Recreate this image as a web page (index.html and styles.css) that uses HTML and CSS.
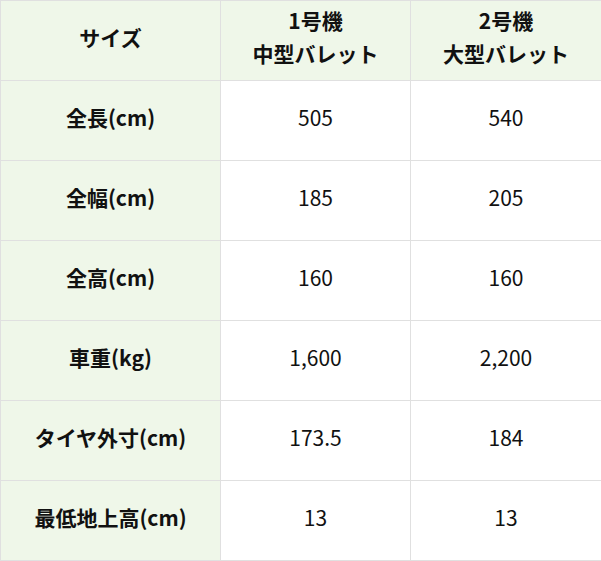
FILE: index.html
```html
<!DOCTYPE html>
<html lang="ja">
<head>
<meta charset="utf-8">
<link rel="stylesheet" href="styles.css">
</head>
<body>
<table class="spec">
  <colgroup><col class="c1"><col class="c2"><col class="c3"></colgroup>
  <thead>
    <tr><th>サイズ</th><th>1号機<br>中型バレット</th><th>2号機<br>大型バレット</th></tr>
  </thead>
  <tbody>
    <tr><th>全長(cm)</th><td>505</td><td>540</td></tr>
    <tr><th>全幅(cm)</th><td>185</td><td>205</td></tr>
    <tr><th>全高(cm)</th><td>160</td><td>160</td></tr>
    <tr><th>車重(kg)</th><td>1,600</td><td>2,200</td></tr>
    <tr><th>タイヤ外寸(cm)</th><td>173.5</td><td>184</td></tr>
    <tr><th>最低地上高(cm)</th><td>13</td><td>13</td></tr>
  </tbody>
</table>
</body>
</html>
```
FILE: styles.css
```css
html, body { margin: 0; padding: 0; background: #fff; }
.spec {
  border-collapse: collapse;
  table-layout: fixed;
  width: 601px;
  font-family: "Noto Sans CJK JP", "Noto Sans", sans-serif;
  font-size: 21px;
  color: #111;
}
.c1 { width: 220px; }
.c2 { width: 190px; }
.c3 { width: 191px; }
.spec tr { height: 80px; }
.spec th, .spec td {
  border: 1px solid #e0e0e0;
  padding: 0 0 7px 0;
  text-align: center;
  vertical-align: middle;
  line-height: 33px;
}
.spec th { background: #eff7e9; font-weight: bold; }
.spec td { background: #fff; font-weight: normal; }
```
